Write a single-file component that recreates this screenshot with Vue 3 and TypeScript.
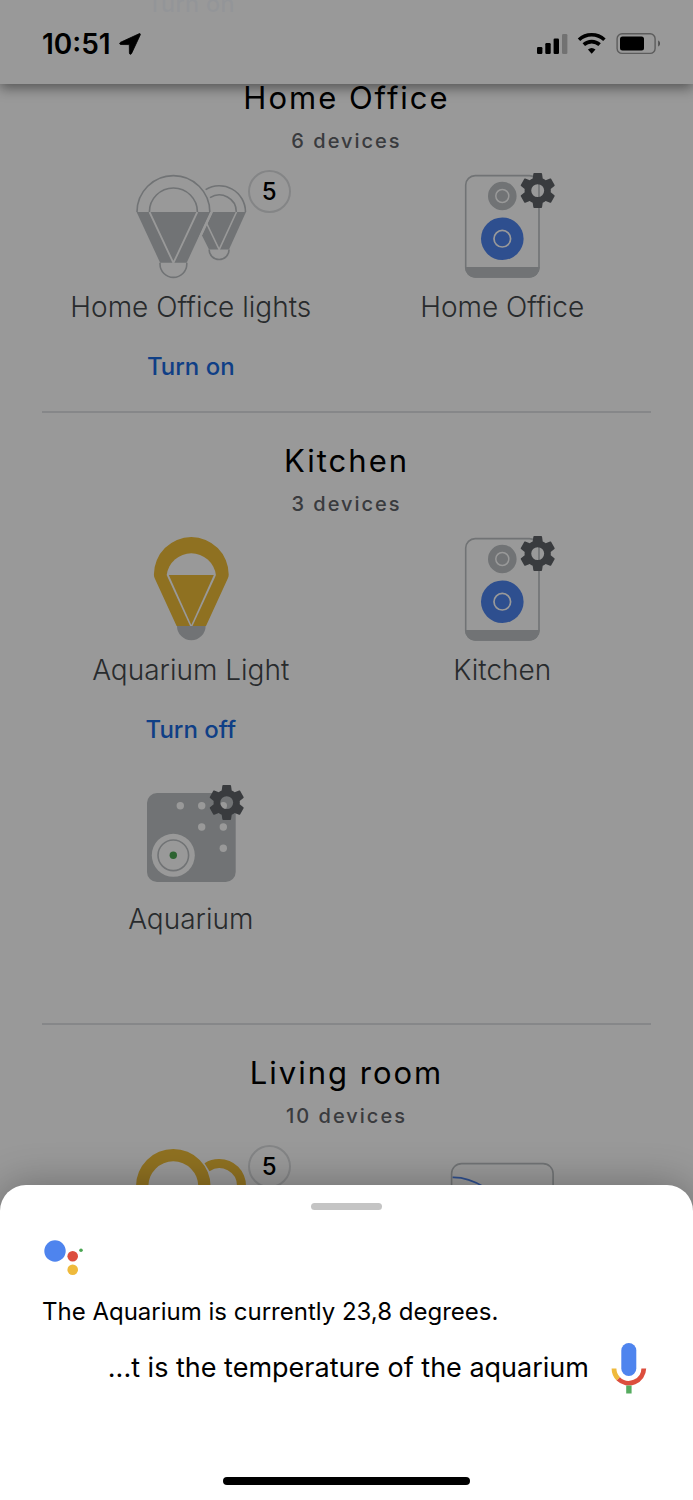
<script setup lang="ts">
type Art = 'lights-off' | 'lights-on' | 'light-on' | 'speaker' | 'sensor' | 'display'

interface Device {
  name: string
  art: Art
  gear?: boolean
  count?: number
  action?: string
}

interface Room {
  name: string
  summary: string
  devices: Device[]
}

const rooms: Room[] = [
  {
    name: 'Home Office',
    summary: '6 devices',
    devices: [
      { name: 'Home Office lights', art: 'lights-off', count: 5, action: 'Turn on' },
      { name: 'Home Office', art: 'speaker', gear: true },
    ],
  },
  {
    name: 'Kitchen',
    summary: '3 devices',
    devices: [
      { name: 'Aquarium Light', art: 'light-on', action: 'Turn off' },
      { name: 'Kitchen', art: 'speaker', gear: true },
      { name: 'Aquarium', art: 'sensor', gear: true },
    ],
  },
  {
    name: 'Living room',
    summary: '10 devices',
    devices: [
      { name: '', art: 'lights-on', count: 5 },
      { name: '', art: 'display' },
    ],
  },
]
</script>

<template>
  <div class="screen">
    <main class="rooms">
      <div class="previous"><button class="action" type="button">Turn on</button></div>
      <section v-for="room in rooms" :key="room.name" class="room">
        <h2>{{ room.name }}</h2>
        <p class="summary">{{ room.summary }}</p>
        <div class="devices">
          <article v-for="(device, i) in room.devices" :key="i" class="device">
            <div class="art">
              <svg viewBox="0 0 220 118" aria-hidden="true">
                <g v-if="device.art === 'lights-off'">
                  <g fill="none" stroke="#bcc0c3" stroke-width="1.600">
                    <path d="M124.600 19.600A26.200 26.200 0 0 1 164.500 42M129 27.700A17 17 0 0 1 155.300 42M128.100 79.500a10 10 0 0 0 20 0" />
                  </g>
                  <path d="M132 42h33l-17 37.500h-20l-7-14z" fill="#bcc0c3" />
                  <path d="M125 52l13.200 27.500L155.500 42" fill="none" stroke="#fff" stroke-width="1.600" />
                  <path d="M55.600 42H129.200L105.700 92.700H79.100z" fill="#bcc0c3" />
                  <path d="M130.600 42l-12 26" stroke="#fff" stroke-width="2" />
                  <path d="M68.500 42l23.900 51 23.900-51" fill="none" stroke="#fff" stroke-width="1.800" />
                  <g fill="none" stroke="#bcc0c3" stroke-width="1.600">
                    <path d="M56 42a36.400 36.400 0 0 1 72.800 0M68.400 42a24 24 0 0 1 48 0M79 92.700v1.300a13.400 13.400 0 0 0 26.800 0v-1.300" />
                  </g>
                </g>
                <g v-else-if="device.art === 'light-on'">
                  <path d="M72.900 41.500a37.400 37.400 0 1 1 74.800 0q0 2-.8 3.800L125 93H95.600L73.700 45.300q-.8-1.800-.8-3.800z" fill="#eebc38" />
                  <path d="M85.700 42a24.800 24.800 0 0 1 49.200 0l-1.200 3-22.200 48h-2.400L87 45z" fill="#fff" />
                  <path d="M87.800 42h45L110.300 92z" fill="#eebc38" />
                  <path d="M96 93h28.600a14.300 14.300 0 0 1-28.600 0z" fill="#bcc0c3" />
                </g>
                <g v-else-if="device.art === 'lights-on'">
                  <path d="M138.300 14a26.700 26.700 0 0 1 26.700 26.700V60h-9V41a17.700 17.700 0 0 0-27.500-14.800l-5-8A26.700 26.700 0 0 1 138.300 14z" fill="#eebc38" />
                  <path d="M55 60V41.300a37.300 37.300 0 0 1 74.600 0V60h-12.300V41.300a25 25 0 0 0-50 0V60z" fill="#eebc38" />
                </g>
                <g v-else-if="device.art === 'speaker'">
                  <rect x="73.700" y="5.600" width="73.300" height="101.300" rx="9.500" fill="none" stroke="#bcc0c3" stroke-width="1.600" />
                  <path d="M73 97h74.700a10.500 10.500 0 0 1-10.500 10.700H83.500A10.500 10.500 0 0 1 73 97z" fill="#bcc0c3" />
                  <circle cx="110.300" cy="26" r="14.300" fill="#bcc0c3" />
                  <circle cx="110.300" cy="26" r="6.500" fill="none" stroke="#fff" stroke-width="1.500" />
                  <circle cx="110.300" cy="68.700" r="21.300" fill="#4e84ee" />
                  <circle cx="110.300" cy="68.700" r="8.300" fill="none" stroke="#fff" stroke-width="1.700" />
                </g>
                <g v-else-if="device.art === 'sensor'">
                  <rect x="66" y="11" width="88.700" height="89" rx="10" fill="#bcc0c3" />
                  <g fill="#fff">
                    <circle cx="99.300" cy="23.700" r="3.700" />
                    <circle cx="120.700" cy="23.700" r="3.700" />
                    <circle cx="142.300" cy="23.700" r="3.700" />
                    <circle cx="120.700" cy="45" r="3.700" />
                    <circle cx="142.300" cy="45" r="3.700" />
                    <circle cx="142.300" cy="66.300" r="3.700" />
                    <circle cx="92.300" cy="73.300" r="21.500" />
                  </g>
                  <circle cx="92.300" cy="73.300" r="15.300" fill="none" stroke="#bcc0c3" stroke-width="1.600" />
                  <circle cx="92.300" cy="73.300" r="3.700" fill="#4ba653" />
                </g>
                <g v-else>
                  <rect x="59.600" y="18.600" width="101.500" height="80" rx="10" fill="none" stroke="#bcc0c3" stroke-width="1.600" />
                  <path d="M60.600 32.300Q76 32 92 42" fill="none" stroke="#4e84ee" stroke-width="1.700" />
                </g>
                <path
                  v-if="device.gear"
                  transform="translate(124.700 -.400) scale(1.750)"
                  fill="#5f6368"
                  d="M19.430 12.980c.04-.32.07-.64.07-.98s-.03-.66-.07-.98l2.110-1.650c.19-.15.24-.42.12-.64l-2-3.460c-.12-.22-.39-.3-.61-.22l-2.490 1c-.52-.4-1.080-.73-1.690-.98l-.38-2.650C14.460 2.180 14.250 2 14 2h-4c-.25 0-.46.18-.49.42l-.38 2.650c-.61.25-1.170.59-1.690.98l-2.490-1c-.23-.09-.49 0-.61.22l-2 3.460c-.13.22-.07.49.12.64l2.110 1.650c-.04.32-.07.65-.07.98s.03.66.07.98l-2.110 1.650c-.19.15-.24.42-.12.64l2 3.460c.12.22.39.3.61.22l2.490-1c.52.4 1.080.73 1.690.98l.38 2.650c.03.24.24.42.49.42h4c.25 0 .46-.18.49-.42l.38-2.650c.61-.25 1.170-.59 1.690-.98l2.490 1c.23.09.49 0 .61-.22l2-3.460c.12-.22.07-.49-.12-.64l-2.110-1.650zM12 15.700a3.700 3.700 0 1 1 0-7.400 3.700 3.700 0 0 1 0 7.400z"
                />
              </svg>
              <span v-if="device.count" class="count">{{ device.count }}</span>
            </div>
            <h3 v-if="device.name">{{ device.name }}</h3>
            <button v-if="device.action" class="action" type="button">{{ device.action }}</button>
          </article>
        </div>
      </section>
    </main>

    <header class="status">
      <div class="clock">
        <time>10:51</time>
        <svg width="22" height="22" viewBox="0 0 22 22" aria-hidden="true">
          <path d="M20 .8L1.500 9.300c-1.300.7-1 2.200.4 2.200l8 .1c.3 0 .4.100.4.4l.1 7.900c0 1.600 1.600 1.800 2.200.5L21.200 2c.5-1.100-.3-1.700-1.200-1.200z" stroke="#000" stroke-width=".8" />
        </svg>
      </div>
      <svg class="indicators" width="124" height="24" viewBox="0 0 124 24" aria-hidden="true">
        <rect x="0" y="15" width="5.400" height="7" rx="1.200" />
        <rect x="8.300" y="11" width="5.400" height="11" rx="1.200" />
        <rect x="16.600" y="6.500" width="5.400" height="15.500" rx="1.200" />
        <rect x="25" y="2" width="5.400" height="20" rx="1.200" opacity=".25" />
        <g fill="none" stroke="#000" stroke-width="3.600">
          <path d="M42 7.700a18.600 18.600 0 0 1 25.400 0" />
          <path d="M46.800 12.700a11.700 11.700 0 0 1 15.800 0" />
        </g>
        <path d="M50.900 17.600a5.700 5.700 0 0 1 7.600 0l-3.800 4.200z" />
        <rect x="80.100" y="1.800" width="38" height="19.600" rx="5" fill="none" stroke="#000" stroke-opacity=".4" stroke-width="1.400" />
        <rect x="83" y="4.600" width="24" height="14" rx="2.500" />
        <path d="M121.200 8.600c2.400 1 2.400 5 0 6z" opacity=".5" />
      </svg>
    </header>

    <div class="scrim"></div>

    <aside class="sheet">
      <button class="handle" type="button" aria-label="Collapse"></button>
      <svg class="logo" width="40" height="36" viewBox="0 0 40 36" aria-hidden="true">
        <circle cx="12" cy="11" r="10.700" fill="#4e84ee" />
        <circle cx="29.700" cy="16.300" r="5.300" fill="#dc4e3d" />
        <circle cx="29.700" cy="29.700" r="5.300" fill="#efba3c" />
        <circle cx="38" cy="10.200" r="1.800" fill="#4ba653" />
      </svg>
      <p class="answer">The Aquarium is currently 23,8 degrees.</p>
      <div class="query">
        <p>...t is the temperature of the aquarium</p>
        <button class="mic" type="button" aria-label="Speak">
          <svg width="36" height="52" viewBox="0 0 36 52" aria-hidden="true">
            <rect x="10.300" y="1" width="15" height="33" rx="7.500" fill="#4e84ee" />
            <path d="M3 26.500a15 15 0 0 0 4.300 10.400" fill="none" stroke="#efba3c" stroke-width="4.800" />
            <path d="M7.300 36.900A15 15 0 0 0 32.800 26.500" fill="none" stroke="#dc4e3d" stroke-width="4.800" />
            <path d="M15.200 43.500h5.400v8h-5.400z" fill="#55ab5f" />
          </svg>
        </button>
      </div>
      <div class="home"></div>
    </aside>
  </div>
</template>

<style>
body {
  margin: 0;
}
</style>

<style scoped>
.screen {
  position: relative;
  height: 100vh;
  overflow: hidden;
  background: #fff;
  font-family: Inter, "Liberation Sans", sans-serif;
  color: #000;
}

h2,
h3,
p {
  margin: 0;
  font-weight: 400;
}

button {
  padding: 0;
  border: 0;
  background: none;
  font: inherit;
}

.previous {
  display: grid;
  grid-template-columns: 1fr 1fr;
  column-gap: 14px;
  align-items: start;
  height: 48px;
  margin: 0 42px;
}

.previous .action {
  margin-top: -14px;
}

.room {
  margin: 0 42px;
  text-align: center;
}

.room + .room {
  border-top: 2px solid #dfe1e4;
}

.room h2 {
  padding-top: 30px;
  font-size: 31px;
  line-height: 40px;
  letter-spacing: 2px;
}

.room + .room h2 {
  padding-top: 28px;
}

.summary {
  margin-top: 11px;
  color: #5f6368;
  font-size: 20px;
  font-weight: 500;
  line-height: 24px;
  letter-spacing: 2px;
}

.devices {
  display: grid;
  grid-template-columns: 1fr 1fr;
  gap: 8px 14px;
  margin-top: 17px;
}

.device {
  display: flex;
  flex-direction: column;
  align-items: center;
  min-height: 241px;
}

.art {
  position: relative;
  width: 220px;
  height: 118px;
}

.art svg {
  display: block;
}

.count {
  position: absolute;
  top: 0;
  right: 10px;
  width: 39px;
  height: 39px;
  border: 2px solid #dcdee0;
  border-radius: 50%;
  font-size: 24px;
  font-weight: 500;
  line-height: 39px;
}

.device h3 {
  color: #44484c;
  font-size: 28px;
  font-weight: 300;
  line-height: 38px;
  white-space: nowrap;
}

.action {
  color: #1a6ae0;
  font-size: 24px;
  font-weight: 500;
  line-height: 36px;
}

.device .action {
  margin-top: 23px;
}

.status {
  position: absolute;
  inset: 0 0 auto;
  display: flex;
  justify-content: space-between;
  align-items: center;
  height: 84px;
  padding: 4px 32px 0 42px;
  box-sizing: border-box;
  background: rgba(255, 255, 255, 0.96);
  box-shadow: 0 4px 12px rgba(0, 0, 0, 0.45);
}

.clock {
  display: flex;
  align-items: center;
  gap: 8px;
  font-size: 28px;
  font-weight: 600;
  line-height: 32px;
}

.scrim {
  position: absolute;
  inset: 0;
  background: rgba(0, 0, 0, 0.4);
}

.sheet {
  position: absolute;
  inset: auto 0 0;
  display: flex;
  flex-direction: column;
  padding: 18px 42px 15px;
  border-radius: 26px 26px 0 0;
  background: #fff;
  box-shadow: 0 0 40px rgba(0, 0, 0, 0.3);
}

.handle {
  align-self: center;
  width: 71px;
  height: 7px;
  border-radius: 4px;
  background: #c4c4c4;
}

.logo {
  margin: 30px 0 0 1px;
}

.answer {
  margin-top: 20px;
  font-size: 24px;
  line-height: 32px;
}

.query {
  display: flex;
  justify-content: flex-end;
  align-items: center;
  gap: 22px;
  margin-top: 14px;
  padding-right: 4px;
  font-size: 27px;
  line-height: 36px;
}

.mic svg {
  display: block;
}

.home {
  align-self: center;
  width: 247px;
  height: 8px;
  margin-top: 83px;
  border-radius: 4px;
  background: #000;
}
</style>
